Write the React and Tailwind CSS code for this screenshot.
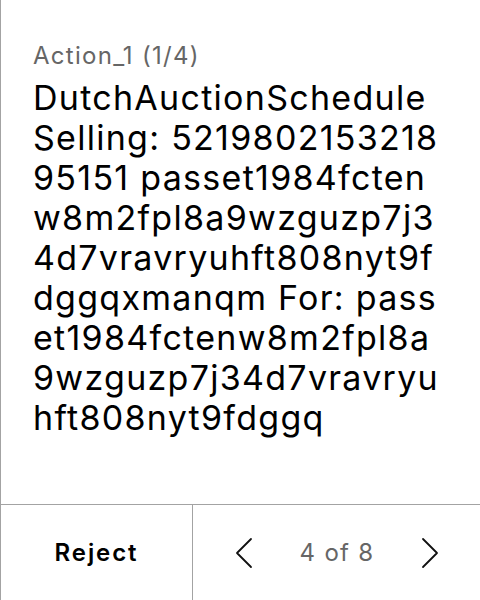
import { useState } from "react";

const body =
  "DutchAuctionSchedule Selling: 521980215321895151 passet1984fctenw8m2fpl8a9wzguzp7j34d7vravryuhft808nyt9fdggqxmanqm For: passet1984fctenw8m2fpl8a9wzguzp7j34d7vravryuhft808nyt9fdggq";

function Chevron({ dir }) {
  return (
    <svg width="20" height="32" viewBox="0 0 20 32" fill="none" stroke="#111" strokeWidth="1.8" strokeLinecap="round" strokeLinejoin="round">
      {dir === "left" ? <polyline points="17,2 3,16 17,30" /> : <polyline points="3,2 17,16 3,30" />}
    </svg>
  );
}

export default function App() {
  const [page, setPage] = useState(4);

  return (
    <div className="w-[480px] h-[600px] flex flex-col bg-white border-l border-[#a3a3a3] font-['Inter',sans-serif] tracking-[0.08em]">
      <div className="flex-1 pl-8 pr-8 pt-[40px]">
        <div className="text-[24px] leading-8 text-[#666]">Action_1 (1/4)</div>
        <div className="mt-[6px] text-[34px] leading-[40px] text-black break-all">{body}</div>
      </div>
      <div className="h-24 flex border-t border-[#a3a3a3]">
        <button className="w-[191px] flex items-center justify-center text-[24px] font-semibold text-black tracking-[0.08em]">Reject</button>
        <div className="flex-1 flex items-center justify-between border-l border-[#a3a3a3] pl-[41px] pr-[40px]">
          <button onClick={() => setPage((p) => Math.max(1, p - 1))}><Chevron dir="left" /></button>
          <span className="text-[24px] text-[#666]">{page} of 8</span>
          <button onClick={() => setPage((p) => Math.min(8, p + 1))}><Chevron dir="right" /></button>
        </div>
      </div>
    </div>
  );
}
